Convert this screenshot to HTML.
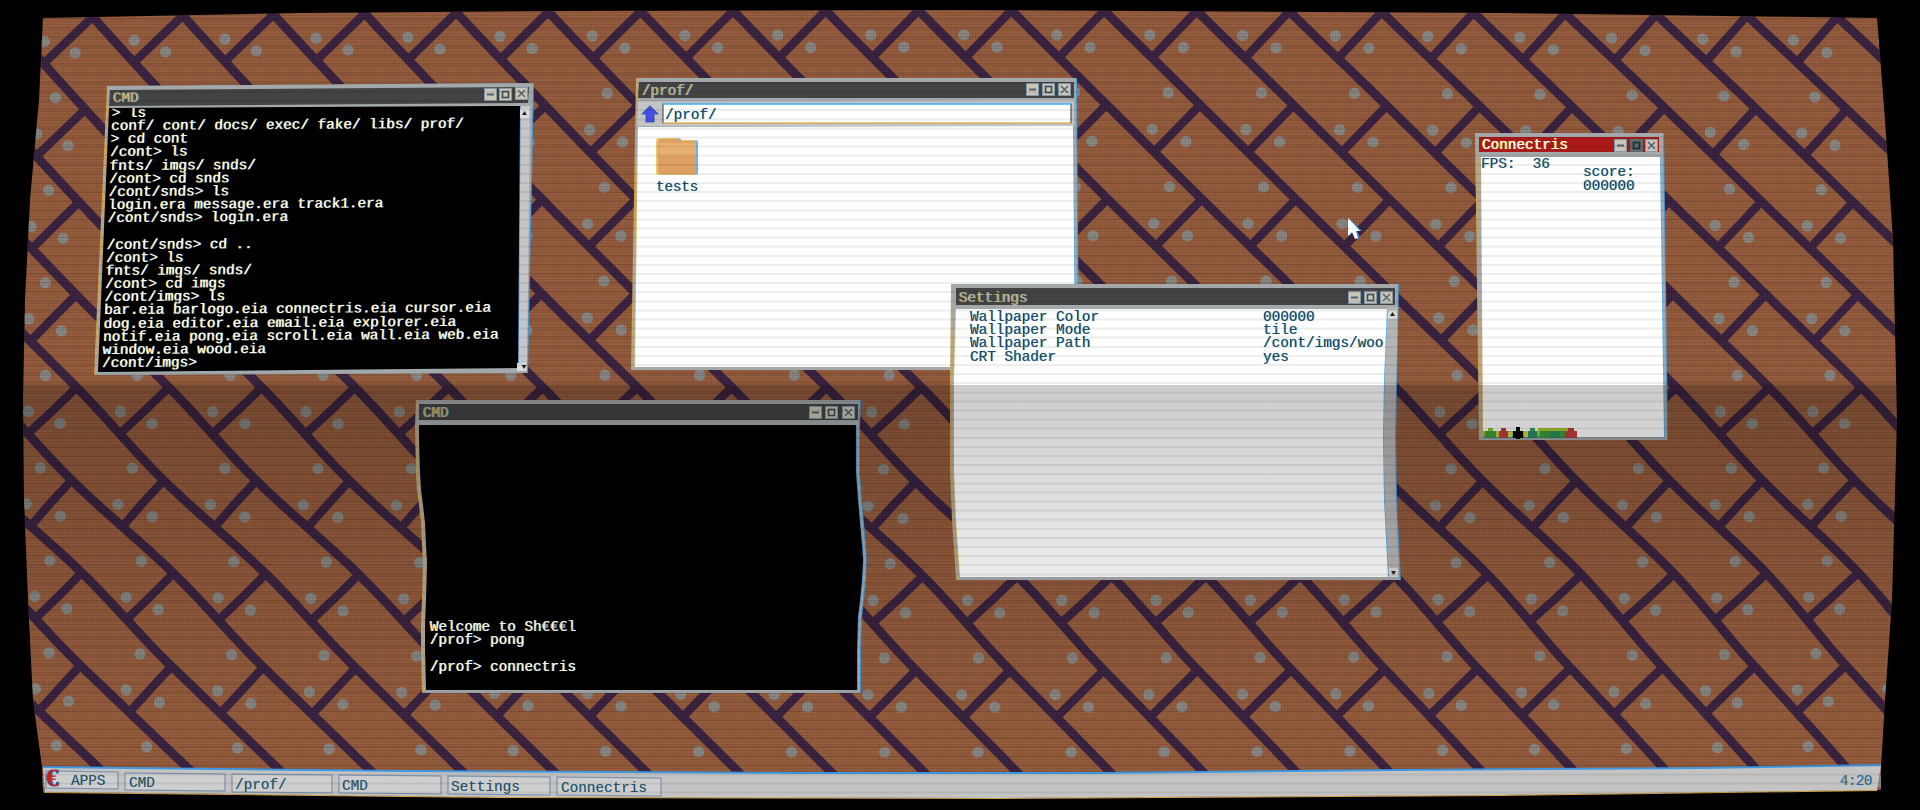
<!DOCTYPE html>
<html><head><meta charset="utf-8"><title>Sh€€€l</title>
<style>
html,body{margin:0;padding:0;background:#000;width:1920px;height:810px;overflow:hidden}
#root{position:relative;width:1920px;height:810px;overflow:hidden;background:#000}
svg.l{position:absolute;left:0;top:0}
.t{position:absolute;white-space:pre;font:14.33px/13.2px "Liberation Mono","DejaVu Sans Mono",monospace;transform-origin:0 0}
.w{color:#fff;text-shadow:-.7px 0 #e8a020,.7px 0 #2f9ff0}
.d{color:#1b4a6e;text-shadow:-.6px 0 #ffd890,.7px 0 #3fa9f0}
.g{color:#b4ae98;text-shadow:-.7px 0 #d89a28,.7px 0 #4a9fd8}
.b{color:#2a5272;text-shadow:-.6px 0 #e6c070,.6px 0 #3f9fe8}
.clip{position:absolute;left:0;top:0;width:1920px;height:810px}
#bands{position:absolute;left:0;top:0;width:1920px;height:810px;pointer-events:none;
background:repeating-linear-gradient(180deg,rgba(0,0,0,.07) 0,rgba(0,0,0,.07) 2px,rgba(0,0,0,0) 2px,rgba(0,0,0,0) 9.1px)}
#roll{position:absolute;left:0;top:385px;width:1920px;height:425px;pointer-events:none;
background:linear-gradient(180deg,rgba(0,0,0,.2) 0,rgba(0,0,0,.075) 195px,rgba(0,0,0,0) 340px)}
</style></head><body><div id="root">
<svg class="l" width="1920" height="810" viewBox="0 0 1920 810" xmlns="http://www.w3.org/2000/svg">
<defs>
<clipPath id="sc"><polygon points="43,18 300,13 560,11 960,10 1500,13 1877,18 1885,120 1893,240 1897,420 1892,600 1885,700 1881,768 1881,790 43,792 42,767 33,700 28,600 24,500 23,400 25,300 30,200 39,100"/></clipPath>
<pattern id="mesh" width="3" height="3" patternUnits="userSpaceOnUse">
<rect width="3" height="1" fill="rgba(0,0,0,.09)"/><rect width="1" height="3" fill="rgba(0,0,0,.05)"/>
<rect x="1" y="1" width="1" height="1" fill="rgba(200,40,30,.08)"/><rect x="2" y="2" width="1" height="1" fill="rgba(40,160,70,.07)"/>
</pattern>
<symbol id="bmin" width="13" height="13" viewBox="0 0 13 13"><rect x=".5" y=".5" width="12" height="12" fill="#cbc5b6" stroke="#7f98ad"/><rect x="3" y="5.5" width="7" height="2" fill="#51606e"/></symbol>
<symbol id="bmax" width="13" height="13" viewBox="0 0 13 13"><rect x=".5" y=".5" width="12" height="12" fill="#cbc5b6" stroke="#7f98ad"/><rect x="3.5" y="3.5" width="6" height="6" fill="none" stroke="#3f4c58" stroke-width="1.6"/></symbol>
<symbol id="bx" width="13" height="13" viewBox="0 0 13 13"><rect x=".5" y=".5" width="12" height="12" fill="#cbc5b6" stroke="#7f98ad"/><path d="M3 3L10 10M10 3L3 10" stroke="#51606e" stroke-width="1.4"/></symbol>
<polygon id="o1" points="108,86 533,83 527,373 95,375"/>
<polygon id="o2" points="637,78 1076,78 1078,370 632,370"/>
<polygon id="o3" points="417,400 860,400 859,425 859,473 861,500 863,523 865,545 866,560 865,580 863,600 861,617 860,650 860,693 423,693 422,650 422,623 423,600 424,563 423,545 422,523 420,505 418,490 417,473 416,425"/>
<polygon id="o4" points="1476,133 1663,133 1667,440 1480,440"/>
<polygon id="o5" points="952,284 1398,284 1396,380 1395,437 1396,500 1400,580 957,580 953,520 951,470 951,380"/>
<polygon id="c1" points="109,108 520,106 518,368 98,372"/>
<polygon id="c2" points="638,127 1073,126 1075,367 635,367"/>
<polygon id="c3" points="419,425 856,425 856,473 858,500 860,523 862,545 863,560 862,580 860,600 858,617 857,650 857,690 426,690 425,650 425,623 426,600 427,563 426,545 425,523 423,505 421,490 420,473 419,440"/>
<polygon id="c4" points="1481,157 1660,157 1664,437 1483,437"/>
<polygon id="c5" points="956,309 1387,309 1384,380 1383,437 1384,500 1388,577 960,577 956,520 954,470 954,380"/>
</defs>
<polygon points="43,18 300,13 560,11 960,10 1500,13 1877,18 1885,120 1893,240 1897,420 1892,600 1885,700 1881,768 1881,790 43,792 42,767 33,700 28,600 24,500 23,400 25,300 30,200 39,100" fill="#975d3e"/>
<g clip-path="url(#sc)">
<g id="wall"></g>
<rect x="0" y="0" width="1920" height="810" fill="url(#mesh)"/>
</g>

<!-- CMD 1 -->
<use href="#o1" x="-1" fill="#d9a441"/><use href="#o1" x="1" fill="#3f97e0"/><use href="#o1" fill="#a3a9ab"/>
<polygon points="110,90 529,87 528,103 109,106" fill="#434343"/>
<polygon points="520,106 530,106 527,370 518,370" fill="#c6c6c6"/>
<use href="#c1" x="-.7" fill="#d9a441"/><use href="#c1" x=".7" fill="#3f97e0"/><use href="#c1" fill="#000"/>
<rect x="520" y="109" width="9" height="9" fill="#dcdcdc"/><rect x="517" y="363" width="9" height="8" fill="#dcdcdc"/>
<path d="M524.5 111l-2.5 4h5zM521.5 365l2.5 4 2.5-4z" fill="#222"/>
<use href="#bmin" x="484" y="88"/><use href="#bmax" x="499" y="88"/><use href="#bx" x="515" y="87"/>

<!-- Explorer -->
<use href="#o2" x="-1" fill="#d9a441"/><use href="#o2" x="1" fill="#3f97e0"/><use href="#o2" fill="#a3a9ab"/>
<polygon points="639,82 1074,82 1074,98 638,98" fill="#434343"/>
<polygon points="638,101 1074,100 1074,126 637,126" fill="#c4c4c4"/>
<rect x="663" y="104" width="408" height="19" fill="#fff" stroke="#2a3a4a" stroke-width="1"/>
<path d="M663 104h408" stroke="#35b0f0" stroke-width="1.5"/><path d="M663 123h408" stroke="#d9a441" stroke-width="1.2"/>
<polygon points="650,106 658,114 654,114 654,122 646,122 646,114 642,114" fill="#4a4ce6" stroke="#1f4fa0" stroke-width=".8"/>
<use href="#c2" x="-.7" fill="#e6b94a"/><use href="#c2" x=".7" fill="#45b0ee"/><use href="#c2" fill="#fff"/>
<path d="M657 141q0-3 3-3h18l3 2h13q3 0 3 3v29q0 3-3 3h-34q-3 0-3-3z" fill="#6ab4ea" transform="translate(1,0)"/>
<path d="M657 141q0-3 3-3h18l3 2h13q3 0 3 3v29q0 3-3 3h-34q-3 0-3-3z" fill="#e9c76c" transform="translate(-1,0)"/>
<path d="M658 142q0-3 3-3h17l3 2h13q2 0 2 2v28q0 3-3 3h-32q-3 0-3-3z" fill="#dfa163"/>
<rect x="659" y="143" width="37" height="13" fill="#eab777" opacity=".7"/>
<use href="#bmin" x="1026" y="83"/><use href="#bmax" x="1042" y="83"/><use href="#bx" x="1058" y="83"/>

<!-- CMD 2 -->
<use href="#o3" x="-1" fill="#d9a441"/><use href="#o3" x="1" fill="#3f97e0"/><use href="#o3" fill="#a3a9ab"/>
<rect x="419" y="404" width="439" height="16" fill="#434343"/>
<use href="#c3" x="-.7" fill="#d9a441"/><use href="#c3" x=".7" fill="#3f97e0"/><use href="#c3" fill="#000"/>
<use href="#bmin" x="809" y="406"/><use href="#bmax" x="825" y="406"/><use href="#bx" x="842" y="406"/>

<!-- Connectris -->
<use href="#o4" x="-1" fill="#d9a441"/><use href="#o4" x="1" fill="#3f97e0"/><use href="#o4" fill="#a3a9ab"/>
<rect x="1479" y="137" width="180" height="15" fill="#ab1a1a"/>
<use href="#c4" x="-.7" fill="#d9a441"/><use href="#c4" x=".7" fill="#45b0ee"/><use href="#c4" fill="#fff"/>
<use href="#bmin" x="1614" y="139"/><rect x="1630" y="139" width="13" height="13" fill="#5b6d6d"/><rect x="1633.5" y="142.5" width="6" height="6" fill="none" stroke="#202c30" stroke-width="1.6"/><use href="#bx" x="1645" y="139"/>
<g>
<rect x="1483" y="431" width="92" height="5" fill="#8ec42a"/>
<rect x="1483" y="436" width="92" height="2" fill="#2ca0b0"/>
<rect x="1485" y="431" width="11" height="7" fill="#3c9a3c"/><rect x="1488" y="428" width="5" height="3" fill="#8ec42a"/>
<rect x="1496" y="431" width="3" height="6" fill="#c9c93a"/>
<rect x="1499" y="431" width="9" height="7" fill="#c0393f"/><rect x="1501" y="428" width="5" height="3" fill="#c0393f"/>
<rect x="1508" y="432" width="4" height="5" fill="#d4d43a"/>
<rect x="1513" y="431" width="10" height="7" fill="#000"/><rect x="1516" y="427" width="4" height="12" fill="#000"/>
<rect x="1524" y="431" width="4" height="6" fill="#d4d43a"/>
<rect x="1528" y="431" width="9" height="7" fill="#2a8a6a"/><rect x="1530" y="428" width="5" height="3" fill="#3c9a5c"/>
<rect x="1540" y="429" width="10" height="9" fill="#3c9a3c"/><rect x="1550" y="428" width="10" height="10" fill="#2a8a5a"/><rect x="1560" y="429" width="11" height="9" fill="#3c9a3c"/><rect x="1538" y="428" width="34" height="3" fill="#a9c92a"/>
<rect x="1565" y="431" width="12" height="7" fill="#c0393f"/><rect x="1568" y="428" width="6" height="3" fill="#c0393f"/>
</g>

<!-- Settings -->
<use href="#o5" x="-1" fill="#d9a441"/><use href="#o5" x="1" fill="#3f97e0"/><use href="#o5" fill="#a3a9ab"/>
<rect x="956" y="288" width="439" height="17" fill="#434343"/>
<polygon points="1387,307 1398,307 1395,437 1396,500 1399,577 1388,577 1384,500 1383,437" fill="#b4b4b4"/>
<use href="#c5" x="-.7" fill="#e6b94a"/><use href="#c5" x=".7" fill="#45b0ee"/><use href="#c5" fill="#fff"/>
<rect x="1388" y="310" width="9" height="9" fill="#d8d8d8"/><rect x="1389" y="568" width="9" height="9" fill="#d8d8d8"/>
<path d="M1392.5 312l-2.5 4h5zM1391 571l2.5 4 2.5-4z" fill="#222"/>
<use href="#bmin" x="1348" y="291"/><use href="#bmax" x="1364" y="291"/><use href="#bx" x="1380" y="291"/>

<!-- Taskbar -->
<polygon points="43,767 400,771 800,773 1100,773 1400,770 1700,768 1881,765 1877,790 1500,795 1000,798 500,797 45,792" fill="#3f97e0" transform="translate(0,-1)"/>
<polygon points="43,792 500,797 1000,798 1500,795 1877,790 1877,791 1500,796 1000,799 500,798 45,793" fill="#d9a441"/>
<polygon points="43,768 400,772 800,774 1100,774 1400,771 1700,769 1881,766 1877,790 1500,795 1000,798 500,797 45,792" fill="#c4c4c4"/>
<g fill="#cfcfcf" stroke="#7f93ab" stroke-width="1.2">
<polygon points="46,771 118,772 118,789 46,788"/>
<polygon points="125,773 225,774 225,791 125,790"/>
<polygon points="232,774 332,775 332,793 232,792"/>
<polygon points="339,775 441,776 441,794 339,793"/>
<polygon points="448,776 550,777 550,795 448,794"/>
<polygon points="557,777 661,778 661,796 557,795"/>
</g>
<!-- Cursor -->
<polygon points="1349,218 1349,236 1353,232 1356,239 1360,238 1357,231 1362,231" fill="#3a8ee0"/>
<polygon points="1348,218 1348,236 1352,232 1355,239 1358,238 1356,231 1360,231" fill="#fff"/>
</svg>

<!-- Text -->
<div class="clip" style="clip-path:polygon(109px 108px,520px 106px,518px 368px,98px 372px)">
<div class="t w" style="left:112px;top:108px;transform:matrix(1,-.006,-.038,1,0,0);line-height:13.15px">&gt; ls
conf/ cont/ docs/ exec/ fake/ libs/ prof/
&gt; cd cont
/cont&gt; ls
fnts/ imgs/ snds/
/cont&gt; cd snds
/cont/snds&gt; ls
login.era message.era track1.era
/cont/snds&gt; login.era

/cont/snds&gt; cd ..
/cont&gt; ls
fnts/ imgs/ snds/
/cont&gt; cd imgs
/cont/imgs&gt; ls
bar.eia barlogo.eia connectris.eia cursor.eia
dog.eia editor.eia email.eia explorer.eia
notif.eia pong.eia scroll.eia wall.eia web.eia
window.eia wood.eia
/cont/imgs&gt;</div></div>
<div class="t g" style="left:113px;top:93px;transform:rotate(-.4deg)">CMD</div>

<div class="t g" style="left:642px;top:86px">/prof/</div>
<div class="t d" style="left:665px;top:110px">/prof/</div>
<div class="t d" style="left:656px;top:181.5px;letter-spacing:-.2px">tests</div>

<div class="t g" style="left:423px;top:407.5px">CMD</div>
<div class="t w" style="left:430px;top:622px;line-height:13.2px">Welcome to Sh€€€l
/prof&gt; pong

/prof&gt; connectris</div>

<div class="t w" style="left:1482px;top:139.5px;text-shadow:-.7px 0 #f0b030,.7px 0 #d8c080">Connectris</div>
<div class="t d" style="left:1481px;top:158.5px">FPS:  36</div>
<div class="t d" style="left:1583px;top:167px">score:</div>
<div class="t d" style="left:1583px;top:181px">000000</div>

<div class="t g" style="left:959px;top:292.5px">Settings</div>
<div class="clip" style="clip-path:polygon(956px 309px,1384px 309px,1384px 380px,956px 380px)">
<div class="t d" style="left:970px;top:311.5px;line-height:13.4px">Wallpaper Color
Wallpaper Mode
Wallpaper Path
CRT Shader</div>
<div class="t d" style="left:1263px;top:311.5px;line-height:13.4px">000000
tile
/cont/imgs/wood.eia
yes</div></div>

<div class="t" style="left:46px;top:767px;font:bold 25px/24px 'Liberation Serif',serif;color:#c8211f;text-shadow:-1px 0 #2f6fb0,1px 0 #2f6fb0">€</div>
<div class="t b" style="left:71px;top:775.5px">APPS</div>
<div class="t b" style="left:129px;top:777.5px">CMD</div>
<div class="t b" style="left:235px;top:779.5px">/prof/</div>
<div class="t b" style="left:342px;top:780.5px">CMD</div>
<div class="t b" style="left:451px;top:782px">Settings</div>
<div class="t b" style="left:561px;top:782.5px">Connectris</div>
<div class="t b" style="left:1840px;top:775.5px;text-shadow:-.6px 0 #70b0e8,.6px 0 #e8a020;letter-spacing:-.6px;color:#2a6ca8">4:20</div>

<div id="roll"></div>
<div id="bands"></div>

<script>
(function(){
var W=[[-200,2],[17,2],[105,3],[197,3],[290,4],[388,6],[478,0],[573,7],[667,0],[758,0],[1000,0]];
function wave(y){for(var n=0;n<W.length-1;n++){if(y<=W[n+1][0]){var t=(y-W[n][0])/(W[n+1][0]-W[n][0]);t=t*t*(3-2*t);return W[n][1]+t*(W[n+1][1]-W[n][1]);}}return 0;}
function R(y){var q=(y-400)/385;return 1.01-.023*q*q;}
function map(i,j){
 var d=i-9.5,xf=94*d-9.5*Math.pow(d/9.5,3),y0=17+92.6*j;
 var x=963+xf*R(y0)+wave(y0);
 var q=xf/900;
 var y=y0+7*(1-q*q)*((y0-385)/385);
 return [x,y];
}
function ok(p,m){return p[0]>m&&p[0]<1920-m&&p[1]>m&&p[1]<810-m;}
function f(p){return p[0].toFixed(1)+","+p[1].toFixed(1);}
var s="",k,i,j,t,p,a,b,c;
for(k=-12;k<24;k++){p=[];for(t=-1.2;t<=10;t+=.05){a=map(k+t,t);if(ok(a,8))p.push(f(a));}
 if(p.length>1)s+='<polyline points="'+p.join(" ")+'" fill="none" stroke="#3b2342" stroke-width="9"/>';}
for(j=-1;j<=9;j++){for(i=-2;i<=23;i++){
 a=map(i,j);b=map(i-.25,j+.25);c=map(i-.5,j+.5);
 if(ok(a,8)&&ok(c,8))s+='<polyline points="'+f(a)+" "+f(b)+" "+f(c)+'" fill="none" stroke="#3b2342" stroke-width="8.5"/>';}}
var D=[[-.34,-.13],[-.515,.26],[-.16,.39]];
for(j=-1;j<=9;j++){for(i=-2;i<=23;i++){for(k=0;k<3;k++){p=map(i+D[k][0],j+D[k][1]);
 if(ok(p,8))s+='<circle cx="'+p[0].toFixed(1)+'" cy="'+p[1].toFixed(1)+'" r="5.6" fill="#8a8986"/>';}}}
document.getElementById("wall").innerHTML=s;
})();
</script>
</div></body></html>
